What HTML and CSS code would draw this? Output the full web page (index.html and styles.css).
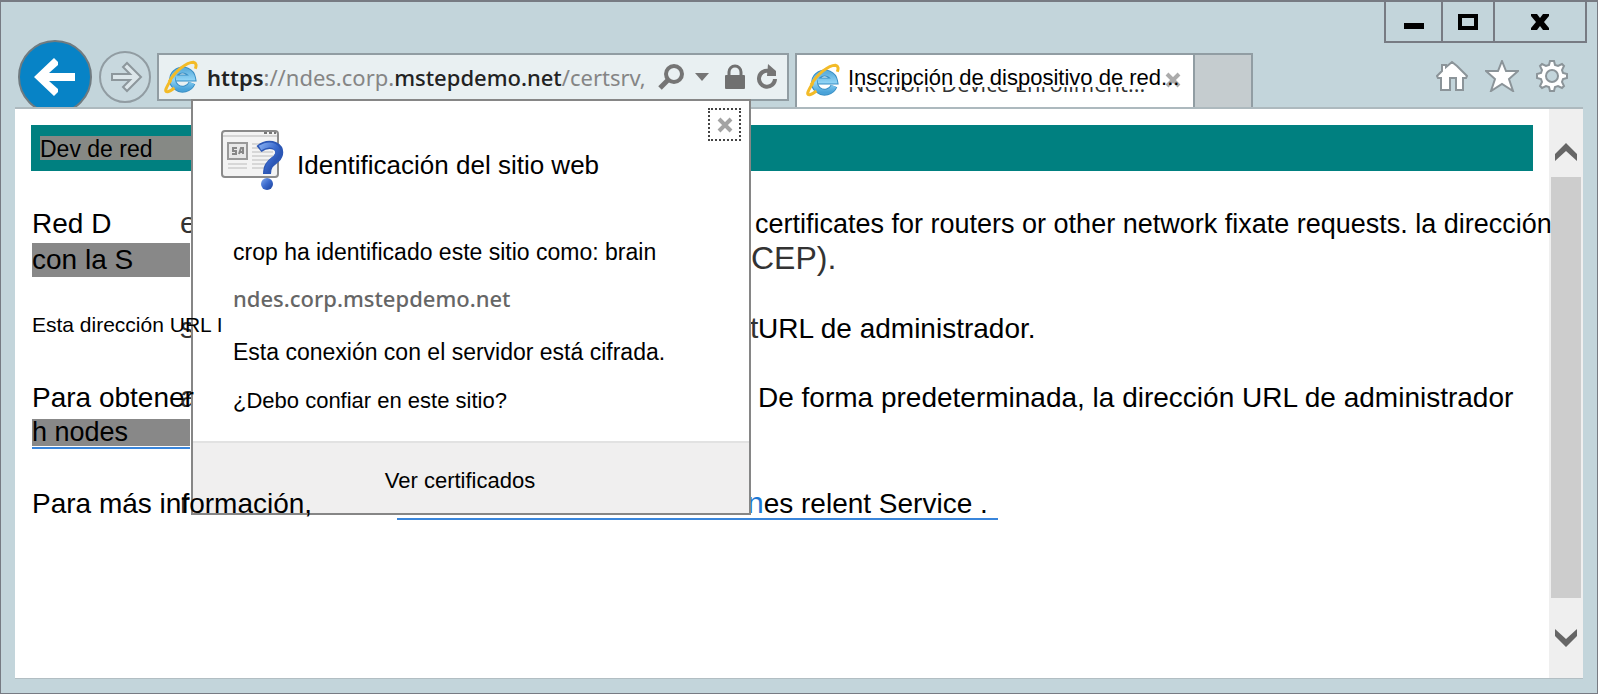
FILE: index.html
```html
<!DOCTYPE html>
<html lang="es">
<head>
<meta charset="utf-8">
<meta name="viewport" content="width=device-width, initial-scale=1">
<title>Inscripción de dispositivo de red</title>
<link rel="stylesheet" href="styles.css">
</head>
<body>
<svg class="defs" aria-hidden="true">
  <defs>
    <linearGradient id="e-blue" x1="0" y1="0" x2="0" y2="1"><stop offset="0" stop-color="#5fb0de"/><stop offset=".5" stop-color="#8fd3f5"/><stop offset="1" stop-color="#4aa3d9"/></linearGradient>
    <linearGradient id="q-blue" x1="0" y1="0" x2="1" y2="1"><stop offset="0" stop-color="#7fa8ee"/><stop offset=".5" stop-color="#3a69cc"/><stop offset="1" stop-color="#1b3f97"/></linearGradient>
    <symbol id="ie" viewBox="0 0 34 34">
      <path d="M28 23A10 9.500 0 1 1 28.500 18H12" fill="none" stroke="#3a8fc4" stroke-width="7"/>
      <path d="M28 23A10 9.500 0 1 1 28.500 18H12" fill="none" stroke="url(#e-blue)" stroke-width="5"/>
      <path d="M7 20C1 29 0 33 4.500 31.500c2-.6 4-2 6-3.500M5 22C11 11 23 2 29.500 2.200c3 .6 3 3.500 1.800 6.500" fill="none" stroke="#f3bb28" stroke-width="3"/>
    </symbol>
  </defs>
</svg>
<div class="window">
  <header class="titlebar">
    <div class="captions">
      <button class="caption" aria-label="Minimizar"><svg width="20" height="20"><path d="M0 17h20v-6H0z"/></svg></button>
      <button class="caption max" aria-label="Maximizar"><svg width="20" height="16"><path d="M2 2h16v12H2z" fill="none" stroke="#000" stroke-width="4"/></svg></button>
      <button class="caption close" aria-label="Cerrar"><svg width="18" height="16"><path d="M0 0h6l3 4 3-4h6v2l-5 6 5 6v2h-6l-3-4-3 4H0v-2l5-6-5-6z"/></svg></button>
    </div>
  </header>
  <nav class="toolbar">
    <button class="back" aria-label="Atrás"><svg width="74" height="74"><circle cx="37" cy="37" r="36" fill="#0783c6" stroke="#707b80" stroke-width="2"/><path d="M16 37l20-19 4 4v3L31 33h26v8H31l9 8v3l-4 4z" fill="#fff"/></svg></button>
    <button class="forward" aria-label="Adelante"><svg width="52" height="52"><circle cx="26" cy="26" r="25" fill="#c8d8de" stroke="#919ca2" stroke-width="2"/><path d="M13 23h18l-7-7 4-4 14 14-14 14-4-4 7-7H13z" fill="#dce6ea" stroke="#8d979c" stroke-width="2"/></svg></button>
    <div class="address">
      <svg class="favicon" width="34" height="34"><use href="#ie"/></svg>
      <div class="url" role="textbox" contenteditable="true" spellcheck="false" aria-label="Dirección"><b class="scheme">https</b>://ndes.corp.<b>mstepdemo.net</b>/certsrv,</div>
      <button class="tool" aria-label="Buscar"><svg width="26" height="26"><circle cx="16" cy="10" r="8" fill="none" stroke="#757575" stroke-width="4"/><path d="M10 16l-8 8" stroke="#757575" stroke-width="5"/></svg></button>
      <button class="tool" aria-label="Mostrar direcciones"><svg width="14" height="8"><path d="M0 0h14L7 8z" fill="#757575"/></svg></button>
      <button class="tool lock" aria-label="Informe de seguridad"><svg width="20" height="26"><path d="M4 12V8a6 6 0 0 1 12 0v4" fill="none" stroke="#707070" stroke-width="3"/><rect y="11" width="20" height="14" rx="1" fill="#707070"/></svg></button>
      <button class="tool" aria-label="Actualizar"><svg width="22" height="26"><path d="M13 7A8 8 0 1 0 19 15" fill="none" stroke="#757575" stroke-width="4"/><path d="M12 0l8 7v5h-9z" fill="#757575"/></svg></button>

      <section class="popup" aria-labelledby="popup-title">
        <button class="popup-close" aria-label="Cerrar"><svg width="16" height="16"><path d="M2 2l12 12M14 2L2 14" stroke="#a3a3a3" stroke-width="4"/></svg></button>
        <div class="popup-head">
          <svg width="64" height="62" aria-hidden="true">
            <rect x="1" y="1" width="56" height="46" rx="3" fill="#f3f3f3" stroke="#8b8b8b" stroke-width="2"/>
            <path d="M2 6h54" stroke="#b5b5b5" stroke-width="1"/><path d="M43 3h3m2 0h3m2 0h2" stroke="#777" stroke-width="2"/>
            <rect x="7" y="13" width="19" height="16" fill="#e8e8e8" stroke="#999" stroke-width="2"/>
            <path d="M16 18h-4v3h3v3h-4m7 0l2-6h2v6m-4-2h4" fill="none" stroke="#888" stroke-width="2"/>
            <path d="M31 14h21M31 18h21M31 22h21M31 26h21M31 30h21M31 34h21M7 34h19M7 38h19M31 38h14" stroke="#bbb"/>
            <path d="M38 19c5-4 11-5 16-3 6 3 5 9 1 13-5 4-9 6-9 15" fill="none" stroke="#2c57b5" stroke-width="8"/>
            <path d="M39 18c5-3 10-4 14-2 5 3 5 8 1 12-4 4-8 6-8 15" fill="none" stroke="url(#q-blue)" stroke-width="5"/>
            <circle cx="46" cy="54" r="6" fill="url(#q-blue)"/>
          </svg>
          <h2 id="popup-title">Identificación del sitio web</h2>
        </div>
        <div class="popup-body">
          <p>crop ha identificado este sitio como: brain</p>
          <p class="host">ndes.corp.mstepdemo.net</p>
          <p>Esta conexión con el servidor está cifrada.</p>
          <p><a class="trust" href="#">¿Debo confiar en este sitio?</a></p>
        </div>
        <footer class="popup-foot"><a href="#">Ver certificados</a></footer>
      </section>
    </div>
    <div class="tab">
      <svg class="favicon" width="34" height="34"><use href="#ie"/></svg>
      <div class="tab-label"><span class="tab-old">Network Device Enrollment...</span><span class="tab-title">Inscripción de dispositivo de red...</span></div>
      <button class="tab-close" aria-label="Cerrar pestaña"><svg width="16" height="16"><path d="M2 2l12 12M14 2L2 14" stroke="#ababab" stroke-width="4"/></svg></button>
    </div>
    <button class="new-tab" aria-label="Nueva pestaña"></button>
    <div class="actions">
      <button aria-label="Inicio"><svg width="32" height="32" viewBox="0 0 32 32"><path d="M16 2l5 4 10 10-1 2h-3v12h-7V18h-6v12H5V18H2l-1-2 5-5V5h4v2z"/></svg></button>
      <button aria-label="Favoritos"><svg width="34" height="32" viewBox="0 0 34 32"><path d="M17 1l4 10h12l-9 8 4 12-11-7-11 7 4-12-9-8h12z"/></svg></button>
      <button aria-label="Herramientas"><svg width="32" height="32" viewBox="0 0 32 32"><path fill-rule="evenodd" d="M14 1h4l1 4 3 1 4-2 2 2-2 4 1 3 4 1v4l-4 1-1 3 2 4-2 2-4-2-3 1-1 4h-4l-1-4-3-1-4 2-2-2 2-4-1-3-4-1v-4l4-1 1-3-2-4 2-2 4 2 3-1zM16 10a6 6 0 1 0 0 12 6 6 0 0 0 0-12z"/></svg></button>
    </div>
  </nav>
  <div class="viewport">
    <main class="page" id="page">
      <h1 class="banner"><span>Dev de red</span></h1>
      <div class="copy">
        <div class="row"><span>Red D</span><i class="under">e</i><span class="mid">certificates for routers or other network fixate requests. la dirección</span></div>
        <div class="row"><span class="mark">con la S</span><span class="faded">CEP).</span></div>
        <div class="row gap"><span class="small">Esta dirección URL I</span><i class="under">s</i><span class="rest">URL de administrador.</span><i class="under edge">t</i></div>
        <div class="row gap"><span>Para obtener</span><i class="under">a</i><span class="rest">De forma predeterminada, la dirección URL de administrador</span></div>
        <div class="row short"><a class="link" href="#"><span class="mark nodes">h nodes</span></a></div>
        <div class="row gap-large"><span>Para más información,</span><i class="under">r</i><a class="service" href="#"><i>n</i>es relent Service .</a></div>
      </div>
    </main>
    <div class="scrollbar" role="scrollbar" aria-label="Desplazamiento vertical" aria-controls="page" aria-valuenow="0">
      <button aria-label="Subir"><svg width="24" height="18"><path d="M1 11L12 0l11 11v7L12 8 1 18z" fill="#666"/></svg></button>
      <div class="thumb"></div>
      <button class="down" aria-label="Bajar"><svg width="24" height="18"><path d="M1 7l11 11L23 7V0L12 10 1 0z" fill="#666"/></svg></button>
    </div>
  </div>
</div>
</body>
</html>
```
FILE: styles.css
```css
* { box-sizing: border-box; }
body { margin: 0; font-family: "Liberation Sans", Arial, sans-serif; color: #000; }
button { padding: 0; border: 0; background: none; font: inherit; display: flex; align-items: center; justify-content: center; }
svg { display: block; flex: none; }
a { color: inherit; text-decoration: none; }
p, h1, h2 { margin: 0; font-weight: 400; }
i { font-style: normal; }
.defs { position: absolute; width: 0; height: 0; }

.window { min-height: 100vh; display: flex; flex-direction: column; padding: 0 14px 14px; border: 1px solid #777b83; border-top-width: 2px; background: #c3d5db; }

.titlebar { display: flex; justify-content: flex-end; margin-right: -4px; }
.captions { display: flex; border: 2px solid #777b83; border-top: 0; }
.caption { width: 55px; height: 39px; }
.caption + .caption { border-left: 2px solid #777b83; }
.caption.max { width: 52px; }
.caption.close { width: 92px; }

.toolbar { display: flex; align-items: flex-start; height: 66px; padding-left: 3px; border-bottom: 2px solid #adb9be; }
.back { height: 67px; margin-top: -3px; overflow: hidden; align-items: flex-start; }
.forward { margin: 8px 6px 0 7px; }
.address { position: relative; flex: 0 1 632px; min-width: 0; height: 48px; margin-top: 10px; padding: 0 9px 0 5px; display: flex; align-items: center; border: 2px solid #919da3; background: #e9f0f2; }
.url { flex: 1; min-width: 0; margin-left: 9px; white-space: nowrap; font: 22px/32px "Noto Sans", "Open Sans", sans-serif; color: #858585; outline: 0; }
.url b { font-weight: 500; color: #222; }
.url .scheme { font-weight: 600; }
.tool { margin-left: 11px; }
.tool.lock { margin-left: 16px; }
.tab { position: relative; z-index: 0; display: flex; align-items: center; flex: 0 1 400px; min-width: 0; height: 54px; margin: 10px 0 0 6px; padding: 0 12px 2px 9px; border: 2px solid #919da3; border-bottom: 0; background: #fff; }
.tab-label { position: relative; z-index: 0; flex: 1; min-width: 0; margin-left: 8px; padding-bottom: 4px; font-size: 22px; line-height: 28px; white-space: nowrap; }
.tab-title { position: relative; }
.tab-old { position: absolute; z-index: -2; left: 0; top: 5px; font: 500 22px/28px "Open Sans", "Noto Sans", sans-serif; color: #333; }
.tab-old::after { content: ""; position: absolute; inset: 0 0 10px; background: #fff; }
.tab-close { position: relative; z-index: -1; }
.new-tab { width: 58px; height: 54px; margin-top: 10px; border: 2px solid #919da3; border-width: 2px 2px 0 0; background: #c5cccf; }
.actions { display: flex; gap: 17px; margin: 17px 15px 0 auto; }
.actions path { fill: #fff; stroke: #8b9499; stroke-width: 2; }

.popup { position: absolute; z-index: 1; top: 44px; left: 32px; width: 560px; border: 2px solid #868686; background: #fff; }
.popup-close { position: absolute; top: 7px; right: 8px; width: 33px; height: 33px; border: 2px dotted #444; }
.popup-head { display: flex; align-items: center; gap: 12px; padding: 29px 26px 0 28px; }
.popup h2 { padding-top: 8px; font-size: 26px; line-height: 32px; white-space: nowrap; }
.popup-body { display: grid; gap: 18px; padding: 45px 40px 25px; font-size: 23px; line-height: 30px; white-space: nowrap; }
.host { margin: -2px 0 6px; font: 500 22px/30px "Noto Sans", "Open Sans", sans-serif; color: #666; }
.trust { font-size: 22px; }
.popup-foot { display: flex; justify-content: center; height: 72px; padding: 25px 22px 0 0; border-top: 2px solid #e2e2e2; background: #f0efef; font-size: 22px; line-height: 26px; }

.viewport { flex: 1; display: flex; background: #fff; border-bottom: 1px solid #b2bec3; }
.page { flex: 1; min-width: 0; padding: 16px 16px 0; }
.banner { padding: 11px 9px; background: #008080; font-size: 23px; line-height: 24px; }
.banner span { display: block; width: 152px; padding-top: 2px; line-height: 22px; background: #868985; }
.copy { padding: 34px 0 0 1px; font-size: 28px; line-height: 36px; white-space: nowrap; }
.row { position: relative; display: grid; grid-template-columns: 358px 365px 1fr; align-items: baseline; height: 36px; }
.row > * { position: relative; grid-row: 1; z-index: 2; }
.row > :first-child { grid-column: 1; justify-self: start; }
.row.short { height: 34px; }
.gap { margin-top: 33px; }
.gap-large { margin-top: 36px; }
.rest, .mid, .faded { grid-column: 3; }
.mid { font-size: 27px; }
.rest { padding-left: 3px; }
.row > .small { align-self: start; font-size: 21px; line-height: 30px; }
.row > .faded { z-index: 0; margin-left: -4px; font-size: 32px; line-height: 34px; color: #333; }
.row > .under { z-index: 0; grid-column: 1; margin-left: 148px; font-size: 30px; color: #333; }
.row > .under.edge { grid-column: 3; margin-left: -5px; }
.mark { display: block; width: 158px; line-height: 34px; background: #888; }
.nodes { line-height: 27px; font-size: 27px; }
.row > .link { align-self: end; padding-bottom: 1px; border-bottom: 2px solid #3985db; line-height: 27px; }
.row > .service { z-index: 0; grid-column: 2 / 4; justify-self: start; margin-left: 7px; padding: 0 10px 0 350px; border-bottom: 2px solid #3985db; line-height: 28px; }
.service i { font-size: 30px; color: #1c78d4; }

.scrollbar { width: 34px; display: flex; flex-direction: column; align-items: center; background: #efefef; }
.scrollbar button { width: 34px; height: 68px; padding-top: 17px; }
.scrollbar .down { height: 80px; padding-top: 0; }
.thumb { flex: 1; width: 30px; background: #cdcdcd; }
```
